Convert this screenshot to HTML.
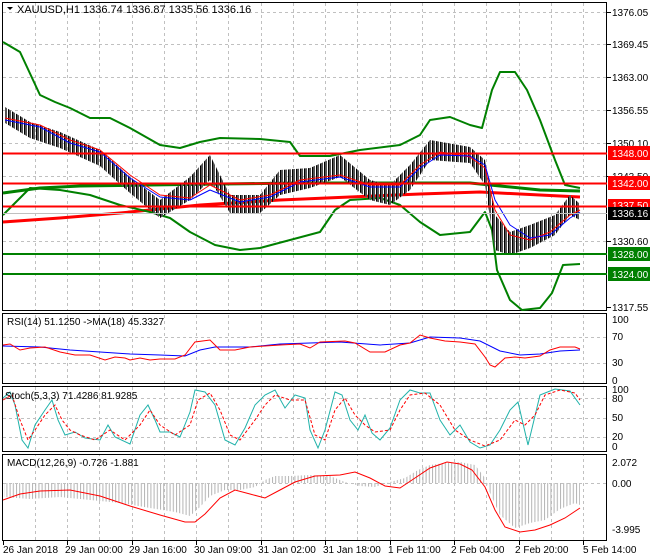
<!DOCTYPE html>
<html><head><meta charset="utf-8"><style>
html,body{margin:0;padding:0;background:#fff;width:650px;height:560px;overflow:hidden}
svg{display:block;font-family:"Liberation Sans",sans-serif;font-size:10px}
</style></head><body>
<svg width="650" height="560" xmlns="http://www.w3.org/2000/svg">
<defs>
<pattern id="hist" width="3.2" height="10" patternUnits="userSpaceOnUse"><rect x="0" y="0" width="1" height="10" fill="#b4b4b4"/></pattern>
<pattern id="cdl" width="4" height="12" patternUnits="userSpaceOnUse"><rect x="0" y="0" width="1" height="12" fill="#000"/><rect x="1" y="0" width="2" height="12" fill="#555"/></pattern>
</defs>
<rect x="0" y="0" width="650" height="560" fill="#fff"/>
<g stroke="#c0c0c0" stroke-dasharray="3,3" stroke-width="1" fill="none">
<path d="M35.5 3V541M67.5 3V541M99.5 3V541M132.5 3V541M164.5 3V541M196.5 3V541M228.5 3V541M261.5 3V541M293.5 3V541M325.5 3V541M357.5 3V541M390.5 3V541M422.5 3V541M454.5 3V541M486.5 3V541M519.5 3V541M551.5 3V541M583.5 3V541"/>
<path d="M3 12.5H607M3 44.5H607M3 77.5H607M3 110.5H607M3 143.5H607M3 176.5H607M3 241.5H607M3 337.5H607M3 363.5H607M3 398.5H607M3 418.5H607M3 437.5H607"/>
</g>
<rect x="0" y="311" width="607" height="2" fill="#fff"/>
<rect x="0" y="384" width="607" height="2" fill="#fff"/>
<rect x="0" y="452" width="607" height="2" fill="#fff"/>
<g fill="none" stroke="#000" stroke-width="1">
<rect x="2.5" y="2.5" width="604" height="308"/>
<rect x="2.5" y="313.5" width="604" height="70"/>
<rect x="2.5" y="386.5" width="604" height="65"/>
<rect x="2.5" y="454.5" width="604" height="86"/>
</g>
<g fill="none" stroke-linejoin="round">
<polyline stroke="#ff0000" stroke-width="3" points="3,222 60,218 120,213 200,205 280,200 350,197 420,194 480,192 520,194 580,197"/>
<polyline stroke="#008000" stroke-width="3" points="3,193 40,188 80,186 150,185 220,184 300,183 400,183 470,183 500,186 540,190 580,191"/>
<polyline stroke="#008000" stroke-width="2" points="3,42 20,52 40,95 55,102 70,108 90,118 110,118 130,128 160,145 180,148 200,142 210,140 220,138 260,139 290,142 300,156 330,156 360,150 400,145 420,135 430,120 450,117 470,125 482,128 492,90 500,72 515,72 527,90 540,120 555,160 565,185 580,188"/>
<polyline stroke="#008000" stroke-width="2" points="3,215 30,188 60,190 90,195 120,205 150,212 170,218 190,232 215,245 240,250 260,248 290,240 320,232 335,210 350,200 380,198 400,205 420,222 440,235 470,232 485,212 492,230 497,270 510,300 522,310 540,308 552,293 563,265 580,264"/>
<polygon fill="url(#cdl)" stroke="none" points="5,107 30,122 60,132 100,150 130,177 160,200 190,177 210,155 230,195 260,195 280,170 310,168 340,155 370,180 390,185 410,165 430,140 470,147 485,160 495,215 510,232 530,225 555,215 570,195 580,204 580,220 570,215 555,235 530,248 510,255 495,250 485,185 470,163 430,160 410,190 390,205 370,200 340,177 310,188 280,195 260,213 230,213 210,180 190,200 160,218 130,193 100,166 60,148 30,138 5,123"/>
<polyline stroke="#ff0000" stroke-width="1" points="5,118 40,125 70,140 100,150 130,175 160,195 190,198 210,185 240,200 270,195 300,180 340,175 370,185 400,185 420,165 440,152 470,157 485,168 495,210 510,235 530,240 550,232 570,215 580,210"/>
<polyline stroke="#0000ff" stroke-width="1" points="5,120 40,127 70,143 100,152 130,178 160,197 190,200 210,190 240,202 270,197 300,182 340,177 370,187 400,187 420,168 440,155 470,156 485,165 495,200 510,225 530,238 550,235 570,218 580,212"/>
<line x1="3" y1="153.5" x2="607" y2="153.5" stroke="#ff0000" stroke-width="2"/>
<line x1="3" y1="183.5" x2="607" y2="183.5" stroke="#ff0000" stroke-width="2"/>
<line x1="3" y1="206.5" x2="607" y2="206.5" stroke="#ff0000" stroke-width="2"/>
<line x1="3" y1="213.5" x2="607" y2="213.5" stroke="#c0c0c0" stroke-width="1"/>
<line x1="3" y1="254" x2="607" y2="254" stroke="#008000" stroke-width="2"/>
<line x1="3" y1="274" x2="607" y2="274" stroke="#008000" stroke-width="2"/>
</g>
<g fill="none" stroke-width="1">
<polyline stroke="#0000ff" points="3,346 40,347 70,350 100,352 130,354 160,355 185,356 200,350 215,347 250,347 280,344 310,343 340,342 380,345 410,343 430,337 460,338 480,341 500,351 520,355 540,354 560,351 580,350"/>
<polyline stroke="#ff0000" points="3,345 10,344 20,350 30,348 45,347 60,352 75,355 90,355 105,360 115,357 125,358 130,360 140,358 150,360 160,359 175,359 185,355 195,342 210,340 220,350 235,350 250,347 265,346 280,345 300,344 310,348 320,342 345,341 355,343 370,352 385,352 400,345 410,343 420,335 430,338 445,341 460,342 475,344 485,357 490,365 495,367 505,358 515,357 525,358 540,356 550,350 560,347 575,347 580,349"/>
<polyline stroke="#20b2aa" points="3,398 10,392 15,405 22,440 28,448 35,425 45,410 52,400 58,420 65,435 75,432 85,438 100,440 108,425 115,437 130,444 140,415 148,405 155,420 160,432 170,432 180,437 190,412 195,390 205,392 215,405 225,440 235,445 245,428 255,405 265,395 275,390 285,408 295,395 305,398 310,430 318,448 325,430 335,392 342,395 350,420 358,430 365,415 372,433 380,440 390,428 400,400 410,390 420,393 430,393 440,420 450,435 460,425 470,442 480,448 490,445 500,430 510,410 518,402 528,445 540,395 555,389 570,391 580,405"/>
<polyline stroke="#ff0000" stroke-dasharray="3,2" points="3,400 12,395 20,420 28,440 35,430 45,415 55,405 62,420 70,430 80,435 95,440 110,430 125,440 140,425 150,410 160,425 175,435 190,425 198,400 210,393 220,410 230,435 240,440 255,420 265,405 275,395 290,400 305,400 315,435 325,440 335,410 345,398 355,415 365,425 375,432 390,430 400,410 410,395 425,393 440,405 455,430 470,440 485,446 500,440 515,420 525,425 535,415 545,395 560,390 575,393 580,400"/>
</g>
<polygon fill="url(#hist)" points="4,483 4,497 30,499 60,497 90,500 120,503 150,508 175,512 190,516 200,507 210,496 225,490 240,490 255,487 265,480 275,476 290,476 310,475 330,476 345,482 360,486 375,487 390,482 405,478 418,470 430,465 445,463 460,462 475,465 485,478 490,493 500,515 515,528 530,523 545,520 560,509 575,503 580,505 580,483"/>
<line x1="3" y1="483.5" x2="607" y2="483.5" stroke="#c0c0c0" stroke-dasharray="3,3"/>
<polyline fill="none" stroke="#ff0000" stroke-width="1" points="3,500 20,494 40,491 70,490 100,496 130,506 160,515 185,522 195,522 205,514 220,498 235,490 250,494 265,498 280,490 295,482 315,476 340,475 355,472 370,478 385,486 400,488 415,478 430,468 447,462 460,464 472,470 485,487 495,510 505,527 520,532 535,530 550,525 565,518 580,508"/>
<g fill="#000">
<path d="M7,7 L13,7 L10,10 Z"/>
<text x="17" y="13" font-size="11">XAUUSD,H1  1336.74 1336.87 1335.56 1336.16</text>
<text x="7" y="325">RSI(14) 51.1250  -&gt;MA(18) 45.3327</text>
<text x="5" y="399">Stoch(5,3,3) 71.4286 81.9285</text>
<text x="7" y="466">MACD(12,26,9) -0.726 -1.881</text>
</g>
<g fill="#000" font-size="10">
<path stroke="#000" d="M607 12.5H611M607 44.5H611M607 77.5H611M607 110.5H611M607 143.5H611M607 176.5H611M607 241.5H611M607 307.5H611"/>
<text x="612" y="16">1376.05</text>
<text x="612" y="48">1369.45</text>
<text x="612" y="81">1363.00</text>
<text x="612" y="114">1356.55</text>
<text x="612" y="147">1350.10</text>
<text x="612" y="180">1343.50</text>
<text x="612" y="245">1330.60</text>
<text x="612" y="311">1317.55</text>
<rect x="608" y="146" width="42" height="14" fill="#ff0000"/><text x="612" y="157" fill="#fff">1348.00</text>
<rect x="608" y="176" width="42" height="14" fill="#ff0000"/><text x="612" y="187" fill="#fff">1342.00</text>
<rect x="608" y="199" width="42" height="13" fill="#ff0000"/><text x="612" y="209" fill="#fff">1337.50</text>
<rect x="608" y="207" width="42" height="13" fill="#000"/><text x="612" y="217" fill="#fff">1336.16</text>
<rect x="608" y="247" width="42" height="14" fill="#008000"/><text x="612" y="258" fill="#fff">1328.00</text>
<rect x="608" y="267" width="42" height="14" fill="#008000"/><text x="612" y="278" fill="#fff">1324.00</text>
<text x="612" y="323">100</text>
<text x="612" y="340">70</text>
<text x="612" y="366">30</text>
<text x="612" y="384">0</text>
<text x="612" y="393">100</text>
<text x="612" y="402">80</text>
<text x="612" y="421">50</text>
<text x="612" y="440">20</text>
<text x="612" y="450">0</text>
<text x="612" y="466">2.072</text>
<text x="612" y="487">0.00</text>
<text x="612" y="533">-3.995</text>
</g>
<g fill="#000" font-size="10">
<text x="3" y="553">26 Jan 2018</text>
<text x="65" y="553">29 Jan 00:00</text>
<text x="129" y="553">29 Jan 16:00</text>
<text x="194" y="553">30 Jan 09:00</text>
<text x="258" y="553">31 Jan 02:00</text>
<text x="323" y="553">31 Jan 18:00</text>
<text x="388" y="553">1 Feb 11:00</text>
<text x="451" y="553">2 Feb 04:00</text>
<text x="515" y="553">2 Feb 20:00</text>
<text x="583" y="553">5 Feb 14:00</text>
</g>
<path stroke="#000" d="M3.5 541V545M67.5 541V545M132.5 541V545M196.5 541V545M261.5 541V545M325.5 541V545M390.5 541V545M454.5 541V545M519.5 541V545M583.5 541V545"/>
</svg>
</body></html>
